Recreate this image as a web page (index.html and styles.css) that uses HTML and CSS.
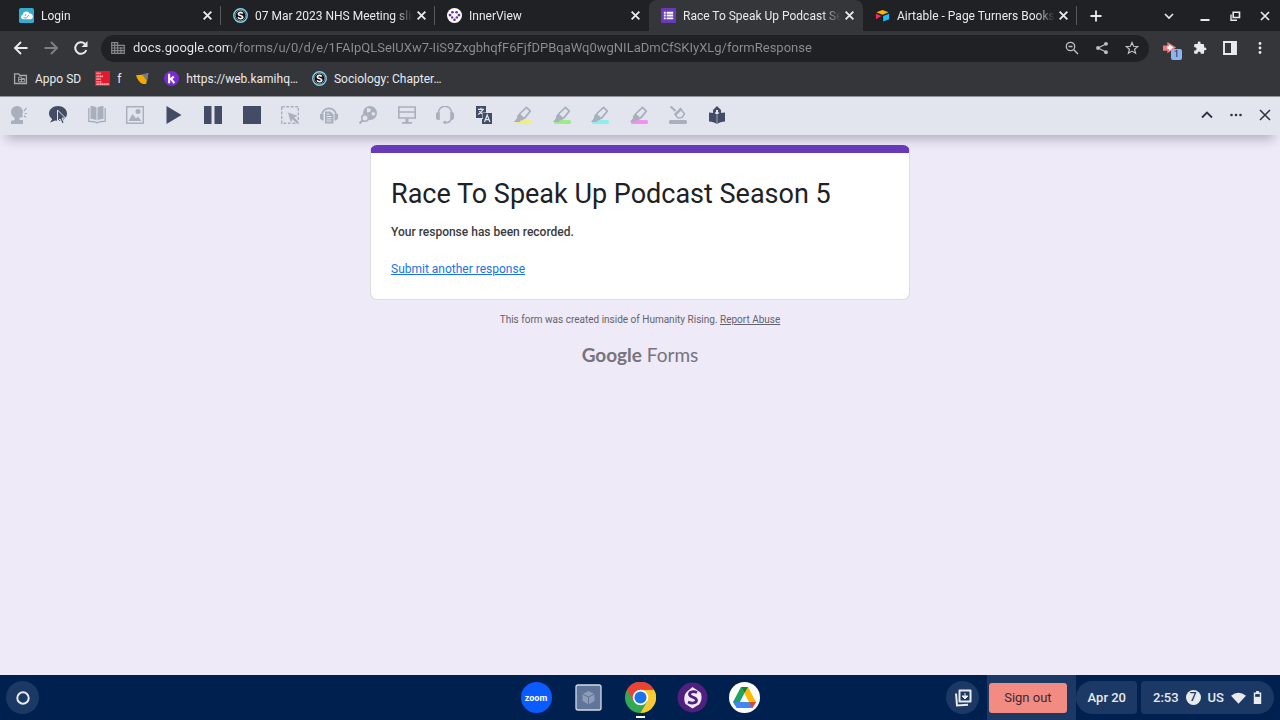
FILE: index.html
```html
<!DOCTYPE html>
<html lang="en">
<head>
    <meta charset="UTF-8">
    <meta name="viewport" content="width=device-width, initial-scale=1.0">
    <title>Race To Speak Up Podcast Season 5</title>
    <link rel="stylesheet" href="styles.css">
</head>
<body>
    <!-- shared icons -->
    <svg class="sprite" aria-hidden="true">
        <symbol id="i-close" viewBox="0 0 10 10"><path d="M1.5 1.5l7 7M8.5 1.5l-7 7" fill="none" stroke="currentColor" stroke-width="1.7"/></symbol>
        <symbol id="i-schoology" viewBox="0 0 16 16">
            <circle cx="8" cy="8" r="7.2" fill="#111" stroke="#7fd0f0" stroke-width="1.5"/>
            <circle cx="8" cy="8" r="5.600" fill="none" stroke="#ddd" stroke-width=".6"/>
            <path d="M10.3 6C9.9 5 9 4.7 8 4.7c-1.300 0-2.300.6-2.300 1.600 0 2.300 4.700 1.200 4.700 3.400 0 1-1 1.700-2.400 1.700-1.200 0-2.100-.5-2.500-1.500" fill="none" stroke="#fff" stroke-width="1.700"/>
        </symbol>
        <symbol id="i-marker" viewBox="0 0 18 18">
            <rect x="1" y="14" width="17" height="4" rx="1.500" fill="currentColor"/>
            <path d="M5.500 8L12.500 1.300l3.800 3.800-5.900 7.300" fill="none" stroke="#a9afbc" stroke-width="1.700" stroke-linejoin="round"/>
            <path d="M5.300 7.200l5.800 5.300-2.600 1.800-1.900.100-1 1.600H0l2.900-3.800.3-2.400z" fill="#a9afbc"/>
        </symbol>
    </svg>

    <header class="browser">
        <div class="tab-strip">
            <div class="tab">
                <svg class="favicon" viewBox="0 0 16 16"><rect width="16" height="16" rx="2" fill="#35abd0"/><path d="M4.500 12a2.500 2.500 0 0 1-.6-4.900A4 4 0 0 1 11.500 6a3 3 0 0 1 .5 6z" fill="#fff"/><path d="M5 9.500a2 2 0 0 0 3.500.5l2-2.500M7.500 6.500l-1 2" fill="none" stroke="#35abd0"/></svg>
                <button class="tab-title">Login</button>
                <button class="tab-close" aria-label="Close tab"><svg><use href="#i-close"/></svg></button>
            </div>
            <div class="tab">
                <svg class="favicon"><use href="#i-schoology"/></svg>
                <button class="tab-title">07 Mar 2023 NHS Meeting slides</button>
                <button class="tab-close" aria-label="Close tab"><svg><use href="#i-close"/></svg></button>
            </div>
            <div class="tab no-line">
                <svg class="favicon" viewBox="0 0 16 16"><circle cx="8" cy="8" r="8" fill="#fff"/><g fill="#6b2aa0"><circle cx="5.800" cy="4.500" r="1.400"/><circle cx="10.200" cy="4.500" r="1.400"/><circle cx="3.200" cy="7.500" r="1.500"/><circle cx="12.800" cy="7.500" r="1.500"/><circle cx="5.500" cy="10" r="1.300"/><circle cx="10.500" cy="10" r="1.300"/><circle cx="8" cy="12.500" r="1.400"/></g></svg>
                <button class="tab-title">InnerView</button>
                <button class="tab-close" aria-label="Close tab"><svg><use href="#i-close"/></svg></button>
            </div>
            <div class="tab active">
                <svg class="favicon" viewBox="0 0 16 16"><rect width="16" height="16" rx="1" fill="#673ab7"/><path d="M3 4h2v2H3zM3 7h2v2H3zM3 10h2v2H3zM6 4h7v2H6zM6 7h7v2H6zM6 10h7v2H6z" fill="#fff"/></svg>
                <button class="tab-title">Race To Speak Up Podcast Season 5</button>
                <button class="tab-close" aria-label="Close tab"><svg><use href="#i-close"/></svg></button>
            </div>
            <div class="tab">
                <svg class="favicon" viewBox="0 0 16 16"><path d="M1.500 4.500L8 2l6.500 2.500L8 7.200z" fill="#fcb400"/><path d="M8.700 8.500L15 6v6L8.700 14.500z" fill="#18bfff"/><path d="M1 6.200l5.800 2.400L1 12z" fill="#f82b60"/></svg>
                <button class="tab-title">Airtable - Page Turners Books</button>
                <button class="tab-close" aria-label="Close tab"><svg><use href="#i-close"/></svg></button>
            </div>
            <button class="new-tab" aria-label="New tab"><svg viewBox="0 0 12 12"><path d="M6 .5v11M.5 6h11" stroke="currentColor" stroke-width="1.800"/></svg></button>
            <div class="window-buttons">
                <button aria-label="Search tabs"><svg viewBox="0 0 12 12"><path d="M2 4l4 4 4-4" fill="none" stroke="currentColor" stroke-width="1.600"/></svg></button>
                <button aria-label="Minimize"><svg viewBox="0 0 12 12"><path d="M1.500 10h9" stroke="currentColor" stroke-width="2"/></svg></button>
                <button aria-label="Restore"><svg viewBox="0 0 12 12"><path d="M4.200 2.200h6.300v5.300H4.200z" fill="none" stroke="currentColor" stroke-width="1.600"/><path d="M2 4.500v5.800h6" fill="none" stroke="currentColor" stroke-width="1.400"/></svg></button>
                <button aria-label="Close window"><svg viewBox="0 0 12 12"><path d="M2 2l8 8M10 2l-8 8" stroke="currentColor" stroke-width="1.700"/></svg></button>
            </div>
        </div>

        <div class="toolbar">
            <nav class="nav-buttons">
                <button aria-label="Back"><svg viewBox="0 0 16 16"><path d="M14.500 8H2.500M8 2L2 8l6 6" fill="none" stroke="currentColor" stroke-width="1.900"/></svg></button>
                <button class="off" aria-label="Forward"><svg viewBox="0 0 16 16"><path d="M1.500 8h12M8 2l6 6-6 6" fill="none" stroke="currentColor" stroke-width="1.900"/></svg></button>
                <button aria-label="Reload"><svg viewBox="0 0 16 16"><path d="M13.300 10A5.700 5.700 0 1 1 12 4" fill="none" stroke="currentColor" stroke-width="2"/><path d="M14.500 1v6h-6z" fill="currentColor"/></svg></button>
            </nav>
            <div class="address">
                <svg viewBox="0 0 14 12"><path d="M.7.700h6v10.600h-6zM6.700 3.300h6.600v8H6.700M1 3.300h6M1 6h12M1 8.600h12M3.700.700v10.600M10 5v6" fill="none" stroke="currentColor" stroke-width="1.200"/></svg>
                <input class="url" type="text" aria-label="Address" spellcheck="false" value="docs.google.com/forms/u/0/d/e/1FAIpQLSeIUXw7-IiS9ZxgbhqfF6FjfDPBqaWq0wgNILaDmCfSKIyXLg/formResponse">
                <button aria-label="Zoom"><svg viewBox="0 0 14 14"><circle cx="5.500" cy="5.500" r="4.200" fill="none" stroke="currentColor" stroke-width="1.300"/><path d="M8.800 8.800L13 13M3.500 5.500h4" stroke="currentColor" stroke-width="1.400"/></svg></button>
                <button aria-label="Share"><svg viewBox="0 0 14 14"><path d="M11 3L3 7l8 4" fill="none" stroke="currentColor" stroke-width="1.200"/><circle cx="11" cy="2.800" r="1.900" fill="currentColor"/><circle cx="3" cy="7" r="1.900" fill="currentColor"/><circle cx="11" cy="11.200" r="1.900" fill="currentColor"/></svg></button>
                <button aria-label="Bookmark"><svg viewBox="0 0 14 14"><path d="M7 1.500l1.600 3.800 4.100.300-3.100 2.700 1 4L7 10.100l-3.600 2.200 1-4L1.300 5.600l4.100-.300z" fill="none" stroke="currentColor" stroke-width="1.200"/></svg></button>
            </div>
            <div class="extensions">
                <button class="ext-badged" aria-label="Read and Write"><svg viewBox="0 0 16 16"><path d="M0 5h5V1l10 6.500L5 14v-3H0z" fill="#ef7b7b"/><path d="M5 6h2V4l5 3.500L7 11V9H5z" fill="#fff"/></svg><span class="badge">1</span></button>
                <button aria-label="Extensions"><svg viewBox="0 0 24 24"><path d="M20.500 11H19V7a2 2 0 0 0-2-2h-4V3.500a2.500 2.500 0 0 0-5 0V5H4a2 2 0 0 0-2 2v3.800h1.500a2.700 2.700 0 0 1 0 5.400H2V20a2 2 0 0 0 2 2h3.800v-1.500a2.700 2.700 0 0 1 5.400 0V22H17a2 2 0 0 0 2-2v-4h1.500a2.500 2.500 0 0 0 0-5z" fill="currentColor"/></svg></button>
                <button aria-label="Side panel"><svg viewBox="0 0 14 14"><path d="M1 1h12v12H1z" fill="none" stroke="currentColor" stroke-width="1.900"/><path d="M8 1h5v12H8z" fill="currentColor"/></svg></button>
                <button aria-label="Menu"><svg viewBox="0 0 14 14"><g fill="currentColor"><circle cx="7" cy="2.500" r="1.400"/><circle cx="7" cy="7" r="1.400"/><circle cx="7" cy="11.500" r="1.400"/></g></svg></button>
            </div>
        </div>

        <nav class="bookmarks">
            <a href="#"><svg viewBox="0 0 16 16"><path d="M2 3h4l1.500 1.800H14.300V13.300H1.700V3z" fill="none" stroke="#a6a9ad" stroke-width="1.400"/><path d="M6 6.500h3v5H6zM9 8h3.500v3.500H9M6 9h6" fill="none" stroke="#a6a9ad"/></svg>Appo SD</a>
            <a href="#"><svg viewBox="0 0 16 16"><path d="M0 0h16v16H0z" fill="#e21a2c"/><path d="M1.500 2.500H6M1.500 5.700h7M1.500 8.700H6M1.500 11.400H7M1.500 14H15" stroke="#f7b4b8" stroke-width="1.700" stroke-dasharray="1.500 .4"/></svg>f</a>
            <a href="#" aria-label="Bookmark"><svg viewBox="0 0 16 16"><path d="M1 4.500c4 0 8-.5 13-2L12 13.500c-4 1.500-8-1-11-9z" fill="#f5a800"/><path d="M7.500 3.500L14.500 2 13 11z" fill="#777b7e"/></svg></a>
            <a href="#"><svg viewBox="0 0 16 16"><circle cx="8" cy="8" r="8" fill="#7b2bd6"/><path d="M5.500 3v10M10.500 6l-4 3.200M7.500 8.500L11 13" fill="none" stroke="#fff" stroke-width="2.200"/></svg>https://web.kamihq…</a>
            <a href="#"><svg><use href="#i-schoology"/></svg>Sociology: Chapter…</a>
        </nav>
    </header>

    <div class="reader-bar">
        <div class="reader-tools">
            <button class="off" aria-label="Talk and type"><svg viewBox="0 0 18 18"><circle cx="7" cy="6" r="6" fill="currentColor"/><path d="M4.500 10h5v4H13v4H1v-3l3.500-1zM9 8l4 1.500-1 2H8z" fill="currentColor"/><path d="M14 5l2.500-3M14.500 7.500H17M14 9.500l2 2" stroke="currentColor" stroke-width="1.200"/></svg></button>
            <button aria-label="Hover speech"><svg viewBox="0 0 18 18"><path d="M9 0c5 0 9 3.300 9 7.500S14.500 15 9 15c-1 0-2-.1-2.800-.4L1 16.500l2.200-3.600C1 11.500 0 9.700 0 7.500 0 3.300 4 0 9 0z" fill="currentColor"/><path d="M8.500 4l8 8-3.500.2 2.200 4.400-2 1L11 13l-2.500 2.500z" fill="currentColor" stroke="#e2e5ed" stroke-width="1"/></svg></button>
            <button class="off" aria-label="Dictionary"><svg viewBox="0 0 18 18"><path d="M2.500 0C5 0 7.500.5 8.500 1.500v13C7.500 13.500 5 13 2.500 13zM15.500 0C13 0 10.500.5 9.500 1.500v13c1-1 3.500-1.500 6-1.500z" fill="currentColor"/><path d="M.8 2v13.300c3 0 6.500.2 8.200 1.700 1.700-1.500 5.200-1.700 8.200-1.700V2" fill="none" stroke="currentColor" stroke-width="1.400"/></svg></button>
            <button class="off" aria-label="Picture dictionary"><svg viewBox="0 0 18 18"><path d="M.7.700h16.600v16.600H.7z" fill="none" stroke="currentColor" stroke-width="1.400"/><circle cx="12" cy="5.500" r="2.500" fill="currentColor"/><path d="M2.500 15l4-7 3.500 4.500 2-2L15.500 15z" fill="currentColor"/></svg></button>
            <button aria-label="Play"><svg viewBox="0 0 18 18"><path d="M1.500 0l15 9-15 9z" fill="currentColor"/></svg></button>
            <button aria-label="Pause"><svg viewBox="0 0 18 18"><path d="M0 0h7.500v18H0zM10.500 0H18v18h-7.500z" fill="currentColor"/></svg></button>
            <button aria-label="Stop"><svg viewBox="0 0 18 18"><path d="M0 0h18v18H0z" fill="currentColor"/></svg></button>
            <button class="off" aria-label="Screenshot reader"><svg viewBox="0 0 18 18"><path d="M.7.700h16.600v16.600H.7z" fill="none" stroke="currentColor" stroke-width="1.400" stroke-dasharray="3 1.500"/><path d="M6.500 6L18 10l-4.500 1.500L18 16l-2 2-4.500-4.500L10 18z" fill="currentColor" stroke="#e2e5ed" stroke-width=".6"/></svg></button>
            <button class="off" aria-label="Audio maker"><svg viewBox="0 0 18 18"><path d="M1.800 9.500a7.200 7.200 0 0 1 14.400 0" fill="none" stroke="currentColor" stroke-width="1.700"/><path d="M0 8h3.500v6.500H2L0 12.500zM18 8h-3.500v6.500H16l2-2zM5 5.500h5.500l3 3V17.500H5z" fill="currentColor"/><path d="M6.500 8h3M6.500 10.500h5M6.500 12.800h5M6.500 15h5" stroke="#e2e5ed"/></svg></button>
            <button class="off" aria-label="Web search"><svg viewBox="0 0 18 18"><circle cx="11" cy="7" r="7" fill="currentColor"/><path d="M8 2l4 1-1 3-3 .5zM13 6l3.500 1-1.500 3-2.500-1.500zM8 8l2 2-1 2z" fill="#e2e5ed"/><circle cx="6" cy="12" r="3.300" fill="#e2e5ed" stroke="currentColor" stroke-width="1.600"/><path d="M3.500 14.500L.5 17.500" stroke="currentColor" stroke-width="2"/></svg></button>
            <button class="off" aria-label="Screen mask"><svg viewBox="0 0 18 18"><path d="M.8 1h16.400v11H.8zM.8 6h16.400" fill="none" stroke="currentColor" stroke-width="1.600"/><path d="M7.500 12.500h3V16H14v1.700H4V16h3.500z" fill="currentColor"/></svg></button>
            <button class="off" aria-label="Speech input"><svg viewBox="0 0 18 18"><path d="M2.300 7a6.700 6.700 0 0 1 13.400 0M15.500 12c-.5 3-2.500 4.500-5.500 4.700" fill="none" stroke="currentColor" stroke-width="1.600"/><path d="M0 7.500Q0 6 3.800 6v8Q0 14 0 12zM18 7.500Q18 6 14.200 6v8q3.800 0 3.800-2z" fill="currentColor"/><circle cx="8.800" cy="16.300" r="1.600" fill="currentColor"/></svg></button>
            <button aria-label="Translator"><svg viewBox="0 0 18 18"><path d="M1 0h10v6.500H7.500V12H1z" fill="currentColor"/><path d="M8 7h9v11H7v-5h1z" fill="currentColor"/><path d="M3 3.300h6M6 1.700v1.600M7.800 3.500C7 6 5 7.500 3 8.500M4.500 5c.5 1.500 1.500 2.500 2.800 3M9.500 16l2.700-7 2.700 7M10.500 13.700h3.500" fill="none" stroke="#e2e5ed" stroke-width="1.200"/></svg></button>
            <button class="mark-yellow" aria-label="Yellow highlight"><svg><use href="#i-marker"/></svg></button>
            <button class="mark-green" aria-label="Green highlight"><svg><use href="#i-marker"/></svg></button>
            <button class="mark-blue" aria-label="Blue highlight"><svg><use href="#i-marker"/></svg></button>
            <button class="mark-pink" aria-label="Pink highlight"><svg><use href="#i-marker"/></svg></button>
            <button class="off" aria-label="Clear highlights"><svg viewBox="0 0 18 18"><rect y="14" width="18" height="4" rx="1.500" fill="currentColor"/><path d="M1.500.5L6.500 5" stroke="currentColor" stroke-width="2.200"/><path d="M6 8.500l5.500-6L15.500 8l-2.500 3.500-4 .5z" fill="none" stroke="currentColor" stroke-width="1.500"/><path d="M5.300 7.500L11 3l1.500 1.500-5.500 5z" fill="currentColor"/></svg></button>
            <button aria-label="Collect highlights"><svg viewBox="0 0 18 18"><path d="M1 6.500c3 0 6 .8 7.700 2.300V18C7 16.500 4 15.800 1 15.500zM17 6.500c-3 0-6 .8-7.700 2.300V18c1.500-1.500 4.700-2.200 7.700-2.500z" fill="currentColor"/><path d="M5 8V4l4-4 4 4v4L9 9z" fill="currentColor"/><path d="M8 4h2v2l1.500 1L9 8.500 6.500 7 8 6z" fill="#e2e5ed"/></svg></button>
        </div>
        <div class="reader-actions">
            <button aria-label="Collapse"><svg viewBox="0 0 14 14"><path d="M2 9.500l5-5 5 5" fill="none" stroke="currentColor" stroke-width="1.800"/></svg></button>
            <button aria-label="More"><svg viewBox="0 0 14 14"><g fill="currentColor"><circle cx="2.500" cy="7" r="1.300"/><circle cx="7" cy="7" r="1.300"/><circle cx="11.500" cy="7" r="1.300"/></g></svg></button>
            <button aria-label="Close toolbar"><svg viewBox="0 0 14 14"><path d="M2 2l10 10M12 2L2 12" stroke="currentColor" stroke-width="1.500"/></svg></button>
        </div>
    </div>

    <main class="page">
        <section class="card">
            <h1>Race To Speak Up Podcast Season 5</h1>
            <p>Your response has been recorded.</p>
            <a href="#">Submit another response</a>
        </section>
        <p class="notice">This form was created inside of Humanity Rising. <a href="#">Report Abuse</a></p>
        <a class="logo" href="#"><span class="logo-name">Google</span> Forms</a>
    </main>

    <footer class="shelf">
        <button class="launcher" aria-label="Launcher"><svg viewBox="0 0 16 16"><circle cx="8" cy="8" r="5.700" fill="none" stroke="currentColor" stroke-width="2"/></svg></button>
        <div class="apps">
            <button class="zoom-app">zoom</button>
            <button aria-label="App"><svg viewBox="0 0 31 31"><rect x="3" y="3" width="25" height="25" rx="2" fill="#60759a" stroke="#d5dae3" stroke-width="1.300"/><path d="M15.500 9l6 3v7l-6 3.500-6-3.500v-7z" fill="#8d9db8"/><path d="M9.500 12l6 3 6-3M15.500 15v7.500" fill="none" stroke="#60759a"/></svg></button>
            <button class="running" aria-label="Chrome"><svg viewBox="0 0 48 48"><circle cx="24" cy="24" r="24" fill="#34a853"/><path d="M24 24L3.200 12A24 24 0 0 1 44.800 12z" fill="#ea4335"/><path d="M24 12h20.800A24 24 0 0 1 24 48l10.400-18z" fill="#fbc934"/><path d="M24 12h20.800A24 24 0 0 0 3.200 12l10.400 18z" fill="#ea4335"/><circle cx="24" cy="24" r="12" fill="#fff"/><circle cx="24" cy="24" r="9.300" fill="#1a73e8"/></svg></button>
            <button aria-label="Screencastify"><svg viewBox="0 0 31 31"><circle cx="15.500" cy="15.500" r="15" fill="#50207f"/><path d="M15.500 5l8 5.500c2 4 1 9-1.500 12l-6.500 4-7-4.500c-2-4-1.500-9 1-12z" fill="#f2e9f8"/><path d="M20 10.500c-3.500-1.500-7.500-1-7.500 1.800 0 3.500 7 2.500 7 6 0 3-4.500 3.500-8.500 1.700" fill="none" stroke="#50207f" stroke-width="2.800"/></svg></button>
            <button aria-label="Drive"><svg viewBox="0 0 31 31"><circle cx="15.500" cy="15.500" r="15.500" fill="#fff"/><path d="M12 5h7l-3.500 6L7.800 26 4 20z" fill="#1ea362"/><path d="M12 5h7l8 15h-7z" fill="#ffba00"/><path d="M12 5h7l-3.500 6z" fill="#188038"/><path d="M8 20h19l-3.700 6H7.800L4 20z" fill="#4285f4"/><path d="M20 20h7l-3.700 6z" fill="#ea4335"/></svg></button>
        </div>
        <div class="tray">
            <button class="holding" aria-label="Files"><svg viewBox="0 0 18 18"><path d="M5.500 1.500h11v11h-11z" fill="none" stroke="currentColor" stroke-width="2" stroke-linejoin="round"/><path d="M2 4.500l1 12 11-.800" fill="none" stroke="currentColor" stroke-width="2"/><path d="M11 4v4M11 10L8 7h6z" stroke="currentColor" fill="currentColor"/></svg></button>
            <div class="sign-out-wrap"><button class="sign-out">Sign out</button></div>
            <button class="date">Apr 20</button>
            <button class="status">
                <span>2:53</span>
                <span class="count">7</span>
                <span>US</span>
                <svg class="wifi" viewBox="0 0 16 12"><path d="M0 3.500Q8-2.500 16 3.500L8 12z" fill="currentColor"/></svg>
                <svg class="battery" viewBox="0 0 9 14"><path d="M3 0h3v1.500h2.500V14H.5V1.500H3z" fill="currentColor"/><path d="M2 3.300h5v3H2z" fill="#1b3964"/></svg>
            </button>
        </div>
    </footer>
</body>
</html>
```

FILE: styles.css
```css
* {
    box-sizing: border-box;
}

body {
    margin: 0;
    min-height: 100vh;
    display: flex;
    flex-direction: column;
    font-family: Roboto, sans-serif;
    font-size: 12px;
    background-color: #eeeaf8;
}

button {
    display: flex;
    align-items: center;
    justify-content: center;
    padding: 0;
    border: none;
    background: none;
    color: inherit;
    font: inherit;
    cursor: pointer;
}

svg {
    display: block;
    flex: none;
}

.sprite {
    position: absolute;
    width: 0;
    height: 0;
}

/* Browser frame */
.browser {
    background-color: #35363a;
    color: #e8eaed;
    border-bottom: 1px solid #8e9095;
}

.tab-strip {
    display: flex;
    height: 31px;
    padding-left: 7px;
    background-color: #202124;
}

.tab {
    flex: 0 1 214px;
    min-width: 0;
    display: flex;
    align-items: center;
    padding: 0 8px 0 12px;
    position: relative;
}

.tab::after {
    content: "";
    position: absolute;
    right: 0;
    top: 6px;
    height: 19px;
    border-right: 1px solid #55575b;
}

.tab.active {
    background-color: #35363a;
    border-radius: 8px 8px 0 0;
}

.tab.active::after,
.tab.no-line::after {
    display: none;
}

.favicon {
    width: 15px;
    height: 15px;
}

.tab-title {
    flex: 1;
    min-width: 0;
    justify-content: flex-start;
    margin: 0 3px 0 7px;
    overflow: hidden;
    white-space: nowrap;
    mask-image: linear-gradient(to right, #000 88%, transparent);
}

.tab-close svg {
    width: 11px;
    height: 11px;
}

.new-tab {
    width: 38px;
}

.new-tab svg,
.window-buttons svg {
    width: 12px;
    height: 12px;
}

.window-buttons {
    display: flex;
    gap: 18px;
    margin-left: auto;
    padding-right: 9px;
}

.window-buttons button:first-child {
    margin-right: 6px;
}

.toolbar {
    display: flex;
    align-items: center;
    height: 34px;
}

.nav-buttons {
    display: flex;
    gap: 14px;
    padding: 0 12px 0 13px;
}

.nav-buttons svg {
    width: 16px;
    height: 16px;
}

.nav-buttons .off {
    color: #7e8083;
}

.address {
    flex: 1;
    display: flex;
    align-items: center;
    gap: 16px;
    height: 27px;
    padding: 0 10px;
    border-radius: 14px;
    background-color: #202124;
    color: #bdc1c6;
}

.address svg {
    width: 14px;
    height: 14px;
}

.address > svg {
    margin-right: -8px;
    color: #85888c;
}

/* host part is brighter than the path */
.url {
    flex: 1;
    min-width: 0;
    padding: 0;
    border: none;
    outline: none;
    font: 13px/20px Roboto, sans-serif;
    color: transparent;
    background: linear-gradient(to right, #e8eaed 96px, #8b8e92 96px);
    background-clip: text;
    -webkit-background-clip: text;
}

.extensions {
    display: flex;
    align-items: center;
    gap: 14px;
    padding: 0 12px 0 13px;
}

.extensions svg {
    width: 16px;
    height: 14px;
}

.ext-badged {
    position: relative;
}

.badge {
    position: absolute;
    left: 9px;
    top: 8px;
    width: 11px;
    height: 11px;
    border-radius: 2px;
    background-color: #8ab4f8;
    color: #202124;
    font-size: 9px;
    line-height: 11px;
}

.bookmarks {
    display: flex;
    align-items: center;
    gap: 14px;
    height: 31px;
    padding: 0 13px 4px;
}

.bookmarks a {
    display: flex;
    align-items: center;
    gap: 7px;
    color: inherit;
    text-decoration: none;
}

.bookmarks svg {
    width: 15px;
    height: 15px;
}

/* Reading toolbar */
.reader-bar {
    display: flex;
    align-items: center;
    justify-content: space-between;
    height: 38px;
    padding: 0 8px 2px 10px;
    background-color: #e2e5ed;
    color: #434c64;
    box-shadow: 0 10px 12px -6px rgba(40, 30, 60, 0.3);
}

.reader-tools {
    flex: 0 1 716px;
    display: flex;
    justify-content: space-between;
}

.reader-tools svg {
    width: 18px;
    height: 18px;
}

.reader-tools .off {
    color: #a9afbc;
}

.reader-tools .mark-yellow {
    color: #eeee88;
}

.reader-tools .mark-green {
    color: #9cec8c;
}

.reader-tools .mark-blue {
    color: #8ceeee;
}

.reader-tools .mark-pink {
    color: #f092f0;
}

.reader-actions {
    display: flex;
    gap: 15px;
    color: #2c3242;
}

.reader-actions svg {
    width: 14px;
    height: 14px;
}

/* Form page */
.page {
    flex: 1;
    display: flex;
    flex-direction: column;
    align-items: center;
    padding: 10px 16px;
    color: #202124;
}

.card {
    width: 100%;
    max-width: 540px;
    padding: 22px 20px 21px;
    border: 1px solid #dadce0;
    border-top: 8px solid #673ab7;
    border-radius: 7px;
    background-color: #fff;
    line-height: 17px;
}

.card h1 {
    margin: 0;
    font-size: 27px;
    font-weight: 400;
    line-height: 38px;
}

.card p {
    margin: 11px 0 20px;
    font-weight: 500;
    color: #3a3b3e;
}

.card a {
    color: #1a73e8;
}

.notice {
    margin: 13px 0 17px;
    font-size: 10px;
    line-height: 14px;
    color: #65636b;
}

.notice a {
    color: inherit;
}

.logo {
    font-family: Lato, sans-serif;
    font-size: 19px;
    line-height: 22px;
    color: #76737c;
    text-decoration: none;
}

.logo-name {
    font-weight: 700;
}

/* Shelf */
.shelf {
    display: grid;
    grid-template-columns: 1fr auto 1fr;
    align-items: center;
    height: 45px;
    padding: 0 6px;
    background-color: #002050;
    color: #e8eaed;
    font-size: 13px;
}

.launcher,
.holding {
    width: 33px;
    height: 33px;
    border-radius: 50%;
    background-color: #1b3964;
}

.launcher svg {
    width: 16px;
    height: 16px;
}

.apps {
    display: flex;
    gap: 21px;
}

.apps button {
    width: 31px;
    height: 31px;
    position: relative;
}

.apps svg {
    width: 31px;
    height: 31px;
}

.apps .zoom-app {
    border-radius: 50%;
    background-color: #0b5cff;
    color: #fff;
    font-size: 9px;
    font-weight: 700;
}

.running::after {
    content: "";
    position: absolute;
    left: 11px;
    bottom: -5px;
    width: 9px;
    height: 2px;
    background-color: #fff;
}

.tray {
    display: flex;
    align-items: center;
    justify-content: flex-end;
    white-space: nowrap;
}

.holding svg {
    width: 18px;
    height: 18px;
}

.sign-out-wrap {
    display: flex;
    align-items: center;
    height: 45px;
    margin-left: 8px;
    padding: 0 9px 0 2px;
    background-color: #1b3964;
}

.sign-out {
    height: 30px;
    padding: 0 15px;
    border-radius: 3px;
    background-color: #f28b82;
    color: #3c2a32;
}

.date,
.status {
    height: 33px;
    background-color: #1b3964;
    font-weight: 500;
}

.date {
    margin-right: 4px;
    padding: 0 11px 0 12px;
    border-radius: 17px 4px 4px 17px;
}

.status {
    gap: 7px;
    padding: 0 12px;
    border-radius: 4px 17px 17px 4px;
}

.count {
    width: 15px;
    height: 15px;
    border-radius: 50%;
    background-color: #e8eaed;
    color: #1b3964;
    font-size: 12px;
    line-height: 15px;
}

.wifi {
    width: 15px;
    height: 12px;
}

.battery {
    width: 9px;
    height: 13px;
}
```
